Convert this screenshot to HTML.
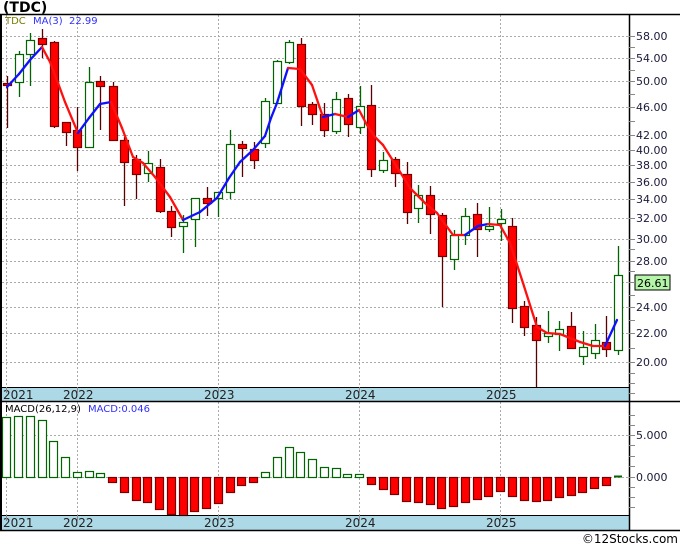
<!DOCTYPE html>
<html><head><meta charset="utf-8"><style>
html,body{margin:0;padding:0;background:#fff;width:680px;height:546px;overflow:hidden}
svg{display:block}
text{font-family:"DejaVu Sans","Liberation Sans",sans-serif}
</style></head><body>
<svg id="s" width="680" height="546" viewBox="0 0 680 546" xmlns="http://www.w3.org/2000/svg">
<rect width="680" height="546" fill="#fff"/>
<text x="3" y="12" font-size="14" font-weight="bold" fill="#000">(TDC)</text>
<g id="grid" stroke="#aaa" stroke-width="1" stroke-dasharray="2,2"></g>
<rect x="1" y="387" width="628" height="14" fill="#add8e6"/>
<rect x="1" y="515" width="628" height="15" fill="#add8e6"/>
<g id="plot"></g>
<line x1="0" y1="14.5" x2="680" y2="14.5" stroke="#000" stroke-width="1.5"/>
<line x1="0" y1="387.5" x2="629" y2="387.5" stroke="#000"/>
<line x1="0" y1="401.5" x2="680" y2="401.5" stroke="#000" stroke-width="1.5"/>
<line x1="0" y1="515.5" x2="629" y2="515.5" stroke="#000"/>
<line x1="0" y1="530.5" x2="680" y2="530.5" stroke="#000" stroke-width="1.5"/>
<line x1="1" y1="14" x2="1" y2="531" stroke="#000" stroke-width="2"/>
<line x1="629.5" y1="14" x2="629.5" y2="531" stroke="#000" stroke-width="1.5"/>
<g font-size="12" fill="#222">
<text x="3" y="399">2021</text><text x="63" y="399">2022</text><text x="204" y="399">2023</text><text x="345" y="399">2024</text><text x="486" y="399">2025</text>
<text x="3" y="527">2021</text><text x="63" y="527">2022</text><text x="204" y="527">2023</text><text x="345" y="527">2024</text><text x="486" y="527">2025</text>
</g>
<g font-size="11" fill="#1a1a3a" id="axis">
<text x="636" y="40">58.00</text><text x="636" y="62">54.00</text><text x="636" y="85">50.00</text><text x="636" y="111">46.00</text>
<text x="636" y="139">42.00</text><text x="636" y="154">40.00</text><text x="636" y="169">38.00</text><text x="636" y="186">36.00</text>
<text x="636" y="203">34.00</text><text x="636" y="222">32.00</text><text x="636" y="243">30.00</text><text x="636" y="265">28.00</text>
<text x="636" y="311">24.00</text><text x="636" y="337">22.00</text><text x="636" y="366">20.00</text>
<text x="636" y="439">5.000</text><text x="636" y="481">0.000</text>
</g>
<rect x="635" y="275" width="35" height="15" fill="#b4f5a8" stroke="#000"/>
<text x="637" y="287" font-size="11" fill="#000">26.61</text>
<text x="5" y="24" font-size="10" fill="#7a7a00">TDC</text>
<text x="33" y="24" font-size="10" fill="#3030ff">MA(3)</text>
<text x="69" y="24" font-size="10" fill="#3030ff">22.99</text>
<text x="5" y="412" font-size="10" fill="#000">MACD(26,12,9)</text>
<text x="88" y="412" font-size="10" fill="#3030ff">MACD:0.046</text>
<text x="678" y="543" font-size="12" fill="#000" text-anchor="end">©12Stocks.com</text>
</svg>
<script>
const NS="http://www.w3.org/2000/svg";
const g=document.getElementById('grid'),p=document.getElementById('plot'),s=document.getElementById('s');
function el(par,t,a){const e=document.createElementNS(NS,t);for(const k in a)e.setAttribute(k,a[k]);par.appendChild(e);return e;}
[36,58,81,107,135,150,165,182,199,218,239,261,282,307,333,362].forEach(y=>el(g,'line',{x1:2,x2:629,y1:y+.5,y2:y+.5}));
[435,477].forEach(y=>el(g,'line',{x1:2,x2:629,y1:y+.5,y2:y+.5}));
[6,77,218,359,500].forEach(x=>{el(g,'line',{x1:x+.5,x2:x+.5,y1:15,y2:387});el(g,'line',{x1:x+.5,x2:x+.5,y1:402,y2:515});
 el(s,'line',{x1:x+.5,x2:x+.5,y1:387,y2:393,stroke:'#888'});el(s,'line',{x1:x+.5,x2:x+.5,y1:515,y2:521,stroke:'#888'});});
[36,47,58,70,81,94,107,121,135,150,165,182,199,218,239,249,261,271,282,295,307,320,333,348,362,373,383,393,435,415,425,445,456,466,477,487,497,507].forEach(y=>el(s,'line',{x1:629,x2:635,y1:y+.5,y2:y+.5,stroke:'#888'}));
const C=[[7,76,128,83,85,'r'],[19,51,97,54,82,'g'],[30,33,86,40,54,'g'],[42,29,58,38,44,'r'],[54,41,128,42,126,'r'],[66,122,146,122,132,'r'],
[77,107,171,130,147,'r'],[89,67,148,82,147,'g'],[100,76,130,81,86,'r'],[113,82,140,86,140,'r'],[124,137,206,140,162,'r'],[136,155,199,159,174,'r'],
[148,151,182,163,173,'g'],[160,159,213,167,211,'r'],[171,206,237,211,227,'r'],[183,215,253,222,226,'g'],[195,198,247,198,219,'g'],[207,187,216,198,203,'r'],
[218,192,217,192,198,'g'],[230,130,199,144,192,'g'],[242,141,177,144,148,'r'],[254,142,169,149,160,'r'],[265,98,148,101,143,'g'],[277,60,103,61,103,'g'],
[289,40,64,42,62,'g'],[301,38,126,44,106,'r'],[312,102,125,104,114,'r'],[324,103,137,114,130,'r'],[336,92,134,99,131,'g'],[348,94,137,98,124,'r'],
[360,86,134,106,127,'g'],[371,85,177,105,169,'r'],[383,152,173,160,170,'g'],[395,157,187,159,173,'r'],[407,162,224,174,212,'r'],[418,185,223,195,208,'g'],
[430,186,234,195,214,'r'],[442,213,307,215,256,'r'],[454,230,270,235,259,'g'],[465,208,245,216,235,'g'],[477,203,257,214,229,'r'],[489,207,232,226,229,'g'],
[501,209,241,219,223,'g'],[512,218,323,226,308,'r'],[524,301,336,306,327,'r'],[536,317,387,325,340,'r'],[548,311,343,333,336,'g'],[559,321,351,329,334,'g'],
[571,312,349,326,348,'r'],[583,331,365,347,356,'g'],[595,324,359,340,353,'g'],[606,316,357,342,349,'r'],[618,246,355,275,350,'g']];
C.forEach(c=>{const [x,wt,wb,bt,bb,col]=c;const r=col=='r';
 el(p,'line',{x1:x+.5,x2:x+.5,y1:wt,y2:wb,stroke:r?'#5a0000':'#006400','stroke-width':1.3});
 el(p,'rect',{x:x-3.5,y:bt+.5,width:8,height:Math.max(bb-bt,1),fill:r?'#ff0000':'#fff',stroke:r?'#7a0000':'#006400','stroke-width':1.2});});
const M=[[7,87],[19,74],[30,60],[42,47],[50,62],[58,83],[65,102],[78,133],[89,118],[100,104],[111,102],[122,128],[133,157],[143,163],[155,177],[170,197],[183,220],[200,212],[217,198],[229,178],[240,162],[253,150],[265,136],[271,118],[277,103],[288,68],[300,69],[312,85],[323,117],[335,114],[348,117],[359,110],[367,125],[375,137],[383,145],[397,167],[410,188],[425,203],[437,213],[453,235],[465,235],[478,226],[488,224],[500,225],[510,243],[523,283],[537,327],[547,333],[560,334],[580,342],[593,346],[605,346],[617,320]];
for(let i=1;i<M.length;i++){const a=M[i-1],b=M[i];el(p,'line',{x1:a[0],y1:a[1],x2:b[0],y2:b[1],stroke:b[1]<a[1]?'#1010ff':'#ff1010','stroke-width':2.3,'stroke-linecap':'round'});}
const B=[[6,417],[18,416],[30,416],[42,420],[53,441],[65,457],[77,472],[89,471],[100,473],[112,482],[124,492],[136,500],[147,502],[159,509],[171,514],[183,515],[194,511],[206,508],[218,503],[230,492],[241,485],[253,482],[265,472],[277,457],[289,447],[300,452],[312,459],[324,467],[336,468],[347,474],[359,474],[371,484],[383,489],[394,494],[406,501],[418,502],[430,504],[441,508],[453,506],[465,502],[477,499],[488,496],[500,491],[512,496],[524,500],[536,501],[547,500],[559,497],[571,495],[582,492],[594,488],[606,485]];
B.forEach(b=>{const [x,y]=b;const up=y<477;
 el(p,'rect',{x:x-3.5,y:up?y+.5:477.5,width:8,height:Math.abs(y-477),fill:up?'#fff':'#ff0000',stroke:up?'#006400':'#7a0000','stroke-width':1.2});});
el(p,'line',{x1:614,x2:622,y1:476.5,y2:476.5,stroke:'#006400','stroke-width':2});
</script>
</body></html>
